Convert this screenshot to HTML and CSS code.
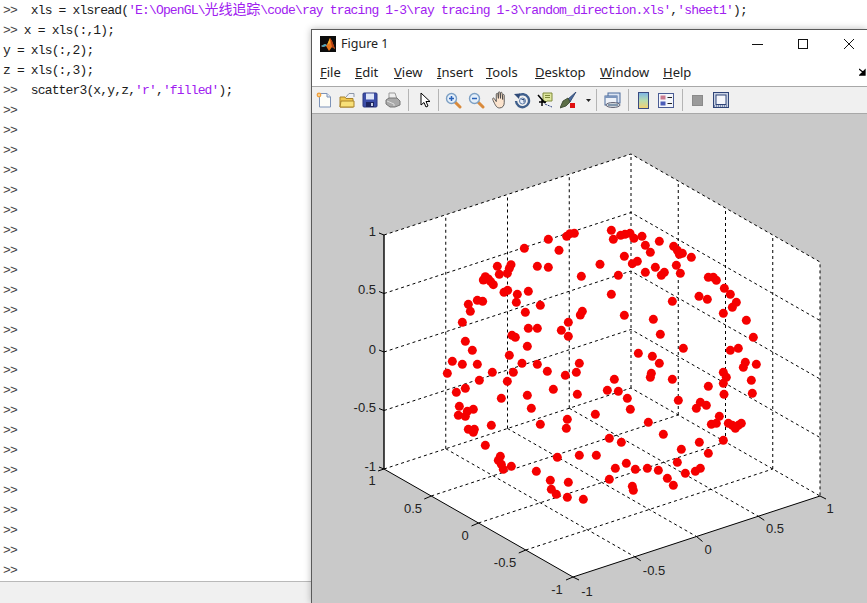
FILE: index.html
```html
<!DOCTYPE html>
<html lang="en">
<head>
<meta charset="utf-8">
<title>MATLAB Figure 1</title>
<link rel="stylesheet" href="styles.css">
</head>
<body>
<main class="console">
  <div class="output">
    <div class="line"><span class="prompt">&gt;&gt;</span>  xls = xlsread(<span class="str">'E:\OpenGL\<span class="cjk">光线追踪</span>\code\ray tracing 1-3\ray tracing 1-3\random_direction.xls'</span>,<span class="str">'sheet1'</span>);</div>
    <div class="line"><span class="prompt">&gt;&gt;</span> x = xls(:,1);</div>
    <div class="line">y = xls(:,2);</div>
    <div class="line">z = xls(:,3);</div>
    <div class="line"><span class="prompt">&gt;&gt;</span>  scatter3(x,y,z,<span class="str">'r'</span>,<span class="str">'filled'</span>);</div>
    <div class="line prompt">&gt;&gt;</div><div class="line prompt">&gt;&gt;</div><div class="line prompt">&gt;&gt;</div><div class="line prompt">&gt;&gt;</div>
    <div class="line prompt">&gt;&gt;</div><div class="line prompt">&gt;&gt;</div><div class="line prompt">&gt;&gt;</div><div class="line prompt">&gt;&gt;</div>
    <div class="line prompt">&gt;&gt;</div><div class="line prompt">&gt;&gt;</div><div class="line prompt">&gt;&gt;</div><div class="line prompt">&gt;&gt;</div>
    <div class="line prompt">&gt;&gt;</div><div class="line prompt">&gt;&gt;</div><div class="line prompt">&gt;&gt;</div><div class="line prompt">&gt;&gt;</div>
    <div class="line prompt">&gt;&gt;</div><div class="line prompt">&gt;&gt;</div><div class="line prompt">&gt;&gt;</div><div class="line prompt">&gt;&gt;</div>
    <div class="line prompt">&gt;&gt;</div><div class="line prompt">&gt;&gt;</div><div class="line prompt">&gt;&gt;</div><div class="line prompt">&gt;&gt;</div>
  </div>
  <div class="statusbar"></div>
</main>

<section class="figure">
  <header class="titlebar">
    <svg class="logo" viewBox="0 0 16 16" width="16" height="16">
      <rect width="16" height="16" fill="#0c0c0c"/>
      <path d="M1 10 L5 8 L7 9 L10 2 L12 5 L15 13 L12 11 L9 15 L6 10 L3 11 Z" fill="#e8761c"/>
      <path d="M10 2 L12 5 L15 13 L12 11 Z" fill="#b33a10"/>
      <path d="M1 10 L5 8 L7 9 L6 10 L3 11 Z" fill="#3fa6c8"/>
      <path d="M7 9 L10 2 L10 7 Z" fill="#f4b030"/>
    </svg>
    <span class="title">Figure 1</span>
    <div class="winctl">
      <svg class="winbtn" viewBox="0 0 46 30" width="46" height="30"><path class="winglyph" d="M18 15.5H29"/></svg>
      <svg class="winbtn" viewBox="0 0 46 30" width="46" height="30"><rect class="winglyph" x="18.5" y="10.5" width="9" height="9"/></svg>
      <svg class="winbtn" viewBox="0 0 46 30" width="46" height="30"><path class="winglyph" d="M18 10L28 20M28 10L18 20"/></svg>
    </div>
  </header>

  <nav class="menubar">
    <span class="menu menu-file"><u>F</u>ile</span>
    <span class="menu menu-edit"><u>E</u>dit</span>
    <span class="menu menu-view"><u>V</u>iew</span>
    <span class="menu menu-insert"><u>I</u>nsert</span>
    <span class="menu menu-tools"><u>T</u>ools</span>
    <span class="menu menu-desktop"><u>D</u>esktop</span>
    <span class="menu menu-window"><u>W</u>indow</span>
    <span class="menu menu-help"><u>H</u>elp</span>
    <svg class="dock" viewBox="0 0 8 8" width="8" height="8"><path d="M0 1L5 5M6 2V7H1Z" fill="#000" stroke="#000" stroke-width="1.3"/></svg>
  </nav>

  <div class="toolbar">
    <span class="tb"><svg viewBox="0 0 16 16" width="16" height="16"><path d="M3.5 1.5H11L14.5 5V15H3.5Z" fill="#fdfdf8" stroke="#7d93b8"/><path d="M11 1.5V5H14.5" fill="#dfe6f2" stroke="#7d93b8"/><circle cx="3" cy="3" r="2.4" fill="#f0a040"/><circle cx="3" cy="3" r="1" fill="#fde2a8"/></svg></span>
    <span class="tb"><svg viewBox="0 0 16 16" width="16" height="16"><path d="M1 5H6L7 6.500H14V15H1Z" fill="#f0c850" stroke="#a8822a"/><path d="M7 5L10 1.500H15V5" fill="#eef0f4" stroke="#8d97a8"/><path d="M2 9H15V15H1Z" fill="#f8e078" stroke="#a8822a"/></svg></span>
    <span class="tb"><svg viewBox="0 0 16 16" width="16" height="16"><rect x="1" y="1" width="14" height="14" rx="1" fill="#3c4ea8" stroke="#2a3680"/><rect x="4" y="1.500" width="8" height="6" fill="#dfe6f8"/><rect x="4" y="10" width="8" height="5" fill="#1d2560"/><rect x="9" y="11" width="2" height="3" fill="#c8d0e8"/></svg></span>
    <span class="tb"><svg viewBox="0 0 16 16" width="16" height="16"><path d="M4 1H10L12 7H4Z" fill="#eeeeee" stroke="#999"/><path d="M1 8L4 6H12L15 9V13L10 15H5L1 12Z" fill="#a9a9a9" stroke="#777"/><path d="M2 9L9 12V14" fill="none" stroke="#ddd"/></svg></span>
    <span class="sep"></span>
    <span class="tb"><svg viewBox="0 0 16 16" width="16" height="16"><path d="M5 1V13L8 10.500L10 15L12 14L10 9.500H14Z" fill="#fff" stroke="#000" stroke-linejoin="round"/></svg></span>
    <span class="sep sep-tight"></span>
    <span class="tb"><svg viewBox="0 0 17 17" width="17" height="17"><path d="M10 10L15 15" stroke="#d98a3c" stroke-width="3" stroke-linecap="round"/><circle cx="6.500" cy="6.500" r="5" fill="#e4effa" stroke="#7da0c4" stroke-width="1.400"/><path d="M4 6.500H9M6.500 4V9" stroke="#2a62b8" stroke-width="1.500"/></svg></span>
    <span class="tb"><svg viewBox="0 0 17 17" width="17" height="17"><path d="M10 10L15 15" stroke="#d98a3c" stroke-width="3" stroke-linecap="round"/><circle cx="6.500" cy="6.500" r="5" fill="#e4effa" stroke="#7da0c4" stroke-width="1.400"/><path d="M4 6.500H9" stroke="#2a62b8" stroke-width="1.500"/></svg></span>
    <span class="tb"><svg viewBox="0 0 17 17" width="18" height="18"><path d="M2 9C1 7 2 6 3 7L5 10V3C5 2 6.500 2 6.500 3L7 7V1.500C7 .5 8.500 .5 8.500 1.500L9 7V2C9 1 10.500 1 10.500 2L11 8V4C11 3 12.500 3 12.500 4V11C12.500 14 11 16 8 16C5 16 4 13 2 9Z" fill="#fbe3cd" stroke="#444" stroke-width=".8"/></svg></span>
    <span class="tb"><svg viewBox="0 0 17 17" width="17" height="17"><path d="M4 4A6.500 6.500 0 1 1 2 9" fill="none" stroke="#3f5f8c" stroke-width="2.400"/><path d="M0 2L6 1.500L5 7Z" fill="#2f4a78"/><circle cx="8.500" cy="9" r="3" fill="#e6eefa" stroke="#5a7aa8"/><path d="M7.500 7.500H10V10.500" fill="none" stroke="#2f4a78"/></svg></span>
    <span class="tb"><svg viewBox="0 0 17 17" width="17" height="17"><path d="M6 1H15V9H10L8 11V9H6Z" fill="#dfe7a0" stroke="#7e8a3a"/><path d="M8 3.500H13M8 5.500H13" stroke="#7e8a3a"/><path d="M1 3L8 11M2 10H9M5 7V14" stroke="#000" stroke-width="1.500"/><path d="M8 12L15 15" stroke="#2a3f80" stroke-dasharray="2 1"/></svg></span>
    <span class="tb"><svg viewBox="0 0 17 17" width="17" height="17"><path d="M16 0L8 7L10 10Z" fill="#4a6a9c" stroke="#27406c" stroke-width=".8"/><path d="M8 6L3 9L0 16L6 14L10 10Z" fill="#5c6e46" stroke="#34402a" stroke-width=".8"/><rect x="10" y="11" width="5" height="5" fill="#e01010"/></svg></span>
    <span class="tb-drop"><svg viewBox="0 0 5 3" width="5" height="3"><path d="M0 0H5L2.500 3Z" fill="#222"/></svg></span>
    <span class="sep sep-drop"></span>
    <span class="tb"><svg viewBox="0 0 17 17" width="17" height="17"><rect x="4" y="1" width="12" height="10" fill="#dbe4f2" stroke="#4a6a9c"/><rect x="1" y="4" width="12" height="9" fill="#eef2f8" stroke="#4a6a9c"/><rect x="1" y="4" width="12" height="2" fill="#7b95bd"/><ellipse cx="9" cy="13" rx="7" ry="2.500" fill="#d0d6dc" stroke="#667"/><path d="M4 13H14" stroke="#355a80"/></svg></span>
    <span class="sep"></span>
    <span class="tb"><svg viewBox="0 0 17 17" width="17" height="17"><defs><linearGradient id="cbar" x1="0" y1="0" x2="0" y2="1"><stop offset="0" stop-color="#7ab4e8"/><stop offset=".5" stop-color="#b8dcb0"/><stop offset="1" stop-color="#f4d070"/></linearGradient></defs><rect x="3.500" y=".5" width="10" height="16" fill="url(#cbar)" stroke="#3a4a80"/></svg></span>
    <span class="tb"><svg viewBox="0 0 17 17" width="17" height="17"><rect x=".5" y="1.500" width="15" height="14" fill="#f4f6fb" stroke="#4a5c94"/><rect x="2.500" y="3.500" width="5" height="4" fill="#c97a90"/><rect x="2.500" y="9.500" width="5" height="4" fill="#4a5cb8"/><path d="M9.500 5.500H14M9.500 11.500H14" stroke="#222"/></svg></span>
    <span class="sep"></span>
    <span class="tb"><svg viewBox="0 0 11 11" width="11" height="11"><rect x=".5" y=".5" width="10" height="10" fill="#9a9a9a" stroke="#8a8a8a"/></svg></span>
    <span class="tb"><svg viewBox="0 0 16 16" width="16" height="16"><rect x=".5" y=".5" width="15" height="15" fill="#c9d2e4" stroke="#2e4478"/><rect x="3" y="3" width="10" height="9.500" fill="#f4f6fb" stroke="#2e4478"/><path d="M1 14H15" stroke="#2e4478" stroke-dasharray="1 1"/></svg></span>
  </div>

  <div class="canvas">
    <svg class="plot" viewBox="312 114 555 489" width="555" height="489">
      <polygon class="panel" points="384,235 631,154 820,262 820,496 573,577 384,469"/>
      <g class="grid">
        <path d="M384 235L631 154L820 262L820 496"/>
        <path d="M384 293.500L631 212.500L820 320.500"/>
        <path d="M384 352L631 271L820 379"/>
        <path d="M384 410.500L631 329.500L820 437.500"/>
        <path d="M445.750 448.750V214.750M507.500 428.500V194.500M569.250 408.250V174.250M631 388V154"/>
        <path d="M678.250 415V181M725.500 442V208M772.750 469V235"/>
        <path d="M384 469L631 388L820 496"/>
        <path d="M445.750 448.750L634.750 556.750M507.500 428.500L696.500 536.500M569.250 408.250L758.250 516.250"/>
        <path d="M431.250 496L678.250 415M478.500 523L725.500 442M525.750 550L772.750 469"/>
      </g>
      <g class="axes">
        <path class="axis-z" d="M384 235V469"/>
        <path d="M384 469L573 577L820 496"/>
        <path d="M384 235l-5-2M384 293.500l-5-2M384 352l-5-2M384 410.500l-5-2M384 469l-5-2"/>
        <path d="M384 469l-6 2M431.250 496l-7 3M478.500 523l-7 3M525.750 550l-7 3M573 577l-7 3"/>
        <path d="M573 577l6 3M634.750 556.750l6 4M696.500 536.500l6 5M758.250 516.250l6 4M820 496l6 3"/>
      </g>
      <g class="ticks">
        <text class="end" x="376" y="236">1</text>
        <text class="end" x="376" y="294">0.5</text>
        <text class="end" x="376" y="354">0</text>
        <text class="end" x="376" y="412">-0.5</text>
        <text class="end" x="376" y="471">-1</text>
        <text class="mid" x="372" y="485">1</text>
        <text class="mid" x="413" y="513">0.5</text>
        <text class="mid" x="465" y="540">0</text>
        <text class="mid" x="505" y="567">-0.5</text>
        <text class="mid" x="557" y="594">-1</text>
        <text class="mid" x="587" y="596">-1</text>
        <text class="mid" x="654" y="575">-0.5</text>
        <text class="mid" x="708" y="554">0</text>
        <text class="mid" x="775" y="533">0.5</text>
        <text class="mid" x="830" y="513">1</text>
      </g>
      <g class="points" transform="translate(340 140) scale(.33333)">
        <circle cx="625" cy="298"/><circle cx="553" cy="325"/><circle cx="657" cy="331"/><circle cx="680" cy="289"/><circle cx="690" cy="281"/><circle cx="703" cy="280"/><circle cx="472" cy="379"/><circle cx="513" cy="374"/><circle cx="508" cy="385"/><circle cx="478" cy="403"/><circle cx="502" cy="400"/><circle cx="592" cy="379"/><circle cx="625" cy="382"/><circle cx="780" cy="373"/><circle cx="724" cy="409"/><circle cx="430" cy="420"/><circle cx="436" cy="410"/><circle cx="445" cy="417"/><circle cx="452" cy="425"/><circle cx="460" cy="434"/><circle cx="492" cy="457"/><circle cx="503" cy="451"/><circle cx="532" cy="463"/><circle cx="565" cy="454"/><circle cx="412" cy="481"/><circle cx="428" cy="484"/><circle cx="385" cy="493"/><circle cx="529" cy="487"/><circle cx="601" cy="496"/><circle cx="391" cy="514"/><circle cx="556" cy="517"/><circle cx="367" cy="547"/><circle cx="727" cy="514"/><circle cx="721" cy="525"/><circle cx="685" cy="547"/><circle cx="565" cy="565"/><circle cx="592" cy="565"/><circle cx="664" cy="571"/><circle cx="516" cy="586"/><circle cx="526" cy="592"/><circle cx="685" cy="589"/><circle cx="376" cy="604"/><circle cx="397" cy="631"/><circle cx="562" cy="619"/><circle cx="508" cy="646"/><circle cx="337" cy="664"/><circle cx="367" cy="673"/><circle cx="412" cy="673"/><circle cx="546" cy="670"/><circle cx="592" cy="673"/><circle cx="718" cy="670"/>
      </g>
      <g class="points" transform="translate(600 140) scale(.33333)">
        <circle cx="34" cy="271"/><circle cx="40" cy="298"/><circle cx="62" cy="286"/><circle cx="75" cy="283"/><circle cx="90" cy="280"/><circle cx="102" cy="295"/><circle cx="126" cy="289"/><circle cx="136" cy="316"/><circle cx="151" cy="337"/><circle cx="178" cy="304"/><circle cx="221" cy="319"/><circle cx="232" cy="331"/><circle cx="238" cy="343"/><circle cx="247" cy="340"/><circle cx="274" cy="352"/><circle cx="73" cy="349"/><circle cx="97" cy="371"/><circle cx="112" cy="364"/><circle cx="166" cy="382"/><circle cx="136" cy="397"/><circle cx="193" cy="397"/><circle cx="184" cy="406"/><circle cx="229" cy="376"/><circle cx="241" cy="400"/><circle cx="55" cy="406"/><circle cx="325" cy="412"/><circle cx="340" cy="412"/><circle cx="349" cy="421"/><circle cx="373" cy="445"/><circle cx="391" cy="463"/><circle cx="34" cy="463"/><circle cx="297" cy="469"/><circle cx="322" cy="478"/><circle cx="217" cy="484"/><circle cx="409" cy="487"/><circle cx="397" cy="502"/><circle cx="370" cy="520"/><circle cx="73" cy="526"/><circle cx="160" cy="538"/><circle cx="439" cy="541"/><circle cx="181" cy="583"/><circle cx="460" cy="592"/><circle cx="250" cy="625"/><circle cx="391" cy="631"/><circle cx="415" cy="625"/><circle cx="115" cy="640"/><circle cx="157" cy="649"/><circle cx="178" cy="670"/><circle cx="436" cy="667"/><circle cx="430" cy="682"/><circle cx="469" cy="673"/>
      </g>
      <g class="points" transform="translate(340 370) scale(.33333)">
        <circle cx="322" cy="10"/><circle cx="457" cy="7"/><circle cx="520" cy="7"/><circle cx="622" cy="4"/><circle cx="676" cy="16"/><circle cx="709" cy="7"/><circle cx="418" cy="31"/><circle cx="502" cy="34"/><circle cx="376" cy="55"/><circle cx="349" cy="67"/><circle cx="640" cy="58"/><circle cx="562" cy="76"/><circle cx="712" cy="73"/><circle cx="484" cy="85"/><circle cx="358" cy="109"/><circle cx="400" cy="118"/><circle cx="382" cy="124"/><circle cx="355" cy="136"/><circle cx="376" cy="139"/><circle cx="574" cy="115"/><circle cx="766" cy="133"/><circle cx="682" cy="148"/><circle cx="454" cy="166"/><circle cx="601" cy="163"/><circle cx="679" cy="175"/><circle cx="385" cy="178"/><circle cx="403" cy="178"/><circle cx="400" cy="187"/><circle cx="436" cy="226"/><circle cx="481" cy="259"/><circle cx="475" cy="271"/><circle cx="484" cy="283"/><circle cx="514" cy="289"/><circle cx="490" cy="298"/><circle cx="652" cy="262"/><circle cx="718" cy="256"/><circle cx="769" cy="256"/><circle cx="589" cy="304"/><circle cx="631" cy="331"/><circle cx="685" cy="337"/><circle cx="634" cy="358"/><circle cx="649" cy="373"/><circle cx="682" cy="382"/><circle cx="730" cy="388"/>
      </g>
      <g class="points" transform="translate(600 370) scale(.33333)">
        <circle cx="43" cy="28"/><circle cx="154" cy="10"/><circle cx="151" cy="22"/><circle cx="217" cy="28"/><circle cx="370" cy="7"/><circle cx="379" cy="22"/><circle cx="370" cy="40"/><circle cx="454" cy="31"/><circle cx="325" cy="49"/><circle cx="22" cy="61"/><circle cx="55" cy="64"/><circle cx="457" cy="70"/><circle cx="372" cy="73"/><circle cx="82" cy="85"/><circle cx="235" cy="91"/><circle cx="301" cy="97"/><circle cx="319" cy="106"/><circle cx="289" cy="115"/><circle cx="91" cy="118"/><circle cx="358" cy="139"/><circle cx="145" cy="157"/><circle cx="334" cy="163"/><circle cx="349" cy="160"/><circle cx="385" cy="160"/><circle cx="397" cy="166"/><circle cx="406" cy="175"/><circle cx="415" cy="166"/><circle cx="424" cy="160"/><circle cx="190" cy="193"/><circle cx="28" cy="205"/><circle cx="64" cy="217"/><circle cx="298" cy="217"/><circle cx="370" cy="211"/><circle cx="244" cy="238"/><circle cx="325" cy="250"/><circle cx="232" cy="277"/><circle cx="79" cy="280"/><circle cx="46" cy="295"/><circle cx="106" cy="298"/><circle cx="142" cy="295"/><circle cx="175" cy="301"/><circle cx="301" cy="295"/><circle cx="286" cy="304"/><circle cx="256" cy="310"/><circle cx="28" cy="328"/><circle cx="202" cy="325"/><circle cx="220" cy="346"/><circle cx="97" cy="349"/><circle cx="100" cy="361"/>
      </g>
    </svg>
  </div>
</section>
</body>
</html>
```

FILE: styles.css
```css
html, body {
  margin: 0;
  padding: 0;
  width: 867px;
  height: 603px;
  overflow: hidden;
  background: #fff;
}

body {
  position: relative;
}

.console {
  display: flex;
  flex-direction: column;
  height: 603px;
}

.output {
  flex: 1;
  padding: 1px 0 0 3px;
  font-family: "Liberation Mono", monospace;
  font-size: 13px;
  letter-spacing: -0.85px;
  color: #1c1c1c;
}

.line {
  height: 20px;
  line-height: 20px;
  white-space: pre;
}

.prompt {
  color: #444;
}

.str {
  color: #a020f0;
}

.cjk {
  font-family: "Noto Sans CJK SC", sans-serif;
  font-size: 14px;
  line-height: 1;
  letter-spacing: -0.1px;
}

.statusbar {
  height: 21px;
  background: #f0f0f0;
  border-top: 1px solid #b9b9b9;
}

.figure {
  position: absolute;
  left: 311px;
  top: 29px;
  right: 0;
  bottom: 0;
  display: flex;
  flex-direction: column;
  box-sizing: border-box;
  border-top: 1px solid #5a5a5a;
  border-left: 1px solid #5a5a5a;
  box-shadow: 0 0 7px rgba(0, 0, 0, 0.28);
  background: #fff;
  font-family: "Noto Sans", sans-serif;
  color: #222;
}

.titlebar {
  display: flex;
  align-items: center;
  height: 27px;
  padding-left: 8px;
}

.logo {
  margin-right: 5px;
}

.title {
  font-size: 12.5px;
}

.winctl {
  display: flex;
  margin-left: auto;
  margin-right: -5px;
}

.winbtn {
  display: block;
}

.winglyph {
  fill: none;
  stroke: #111;
  stroke-width: 1;
}

.menubar {
  display: flex;
  align-items: center;
  box-sizing: border-box;
  height: 30px;
  padding: 1px 0 0 8px;
  border-bottom: 1px solid #a8a8a8;
  font-size: 13px;
}

.menu {
  color: #222;
}

.menu-file { width: 35px; }
.menu-edit { width: 39px; }
.menu-view { width: 43px; }
.menu-insert { width: 49px; }
.menu-tools { width: 49px; }
.menu-desktop { width: 65px; }
.menu-window { width: 63px; }
.menu-help { width: 40px; }

.dock {
  margin-left: auto;
}

.toolbar {
  display: flex;
  align-items: center;
  height: 26px;
  background: #f0f0f0;
  border-bottom: 1px solid #a8a8a8;
}

.tb {
  display: flex;
  align-items: center;
  justify-content: center;
  width: 23px;
  height: 22px;
  flex: none;
}

.tb-drop {
  display: flex;
  align-items: center;
  justify-content: center;
  width: 16px;
}

.sep {
  width: 1px;
  height: 22px;
  margin: 0 3px 0 4px;
  background: #b4b4b4;
  flex: none;
}

.sep-tight {
  margin: 0 3px;
}

.sep-drop {
  margin: 0 4px 0 0;
}

.canvas {
  flex: 1;
  min-height: 0;
  overflow: hidden;
  background: #c9c9c9;
}

.plot {
  display: block;
}

.panel {
  fill: #fff;
}

.grid path {
  fill: none;
  stroke: #000;
  stroke-width: 1;
  stroke-dasharray: 3 3;
}

.axes path {
  fill: none;
  stroke: #000;
  stroke-width: 1;
}

.axes .axis-z {
  stroke-width: 1.4;
}

.ticks text {
  font-family: "Liberation Sans", sans-serif;
  font-size: 13px;
  fill: #222;
}

.ticks .end {
  text-anchor: end;
}

.ticks .mid {
  text-anchor: middle;
}

.points circle {
  fill: #f50000;
  r: 13.5px;
}
```
